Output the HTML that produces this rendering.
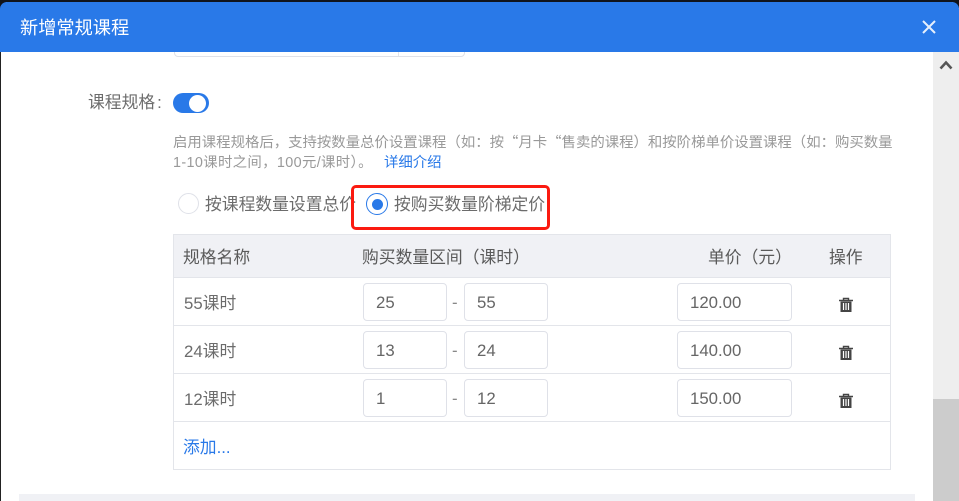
<!DOCTYPE html>
<html lang="zh-CN">
<head>
<meta charset="utf-8">
<style>
html,body{margin:0;padding:0;width:959px;height:501px;overflow:hidden;background:#fff}
body{position:relative;font-family:"Liberation Sans","Noto Sans CJK SC",sans-serif;color:#666}
div,span.a,a{position:absolute;box-sizing:border-box;white-space:nowrap}
.t{font-size:16.8px;line-height:24px;color:#6c6c6c}
.h{font-size:16.8px;line-height:24px;color:#5a5a5a}
.i{background:#fff;border:1px solid #dfe1e8;border-radius:4px;height:38px;font-size:16.8px;line-height:38px;color:#666;padding-left:12px}
.l{left:173px;width:718px;height:1px;background:#e3e5ea}
</style>
</head>
<body>
<div style="left:0;top:0;width:959px;height:2px;background:#10141c"></div>
<div style="left:0;top:0;width:1px;height:501px;background:#222"></div>
<div style="left:0;top:0;width:6px;height:8px;background:#10141c"></div>
<div style="left:953px;top:0;width:6px;height:8px;background:#10141c"></div>

<div style="left:174px;top:40px;width:291px;height:17px;border:1px solid #dfe1e8;border-radius:4px;background:#fff"></div>
<div style="left:398px;top:40px;width:1px;height:16px;background:#e3e5ea"></div>

<div style="left:0;top:2px;width:959px;height:50px;background:#2979e8;border-radius:7px 7px 0 0"></div>
<div style="left:20px;top:15px;font-size:18.2px;line-height:26px;color:#fff">新增常规课程</div>
<svg style="position:absolute;left:921px;top:19px" width="16" height="16" viewBox="0 0 16 16"><path d="M2 2L14 14M14 2L2 14" stroke="#e6effc" stroke-width="2" fill="none"/></svg>

<div style="left:933px;top:52px;width:26px;height:449px;background:#eee"></div>
<div style="left:933px;top:399px;width:26px;height:102px;background:#ccc"></div>
<svg style="position:absolute;left:939px;top:59px" width="14" height="12" viewBox="0 0 14 12"><path d="M1.500 9.500L7 3.500L12.500 9.500" stroke="#555" stroke-width="2.600" fill="none"/></svg>

<div class="t" style="left:88px;top:91px">课程规格<span style="margin-left:2px">:</span></div>
<div style="left:173px;top:93px;width:36px;height:20px;background:#2979e8;border-radius:10px"></div>
<div style="left:189px;top:95px;width:17px;height:17px;background:#fff;border-radius:50%"></div>

<div style="left:173px;top:132px;font-family:'Noto Sans CJK SC',sans-serif;font-size:14.4px;line-height:20px;color:#999">启用课程规格后，支持按数量总价设置课程（如：按“月卡“售卖的课程）和按阶梯单价设置课程（如：购买数量</div>
<div style="left:173px;top:153px;font-size:14.4px;line-height:20px;color:#999;letter-spacing:.35px">1-10课时之间，100元/课时）。</div>
<div style="left:384px;top:153px;font-size:14.4px;line-height:20px;color:#2979e8">详细介绍</div>

<div style="left:178px;top:193px;width:21px;height:21px;border:1px solid #dfe1e8;border-radius:50%;background:#fff"></div>
<div class="t" style="left:205px;top:193px">按课程数量设置总价</div>
<div style="left:351px;top:185px;width:198.500px;height:45px;border:3px solid #fb1a10;border-radius:5px"></div>
<div style="left:366px;top:193px;width:22px;height:22px;border:1.500px solid #2979e8;border-radius:50%;background:#fff"></div>
<div style="left:371.500px;top:198.500px;width:11px;height:11px;border-radius:50%;background:#2979e8"></div>
<div class="t" style="left:394px;top:193px">按购买数量阶梯定价</div>

<div style="left:173px;top:234px;width:718px;height:44px;background:#f0f1f5"></div>
<div class="l" style="top:234px"></div>
<div class="l" style="top:277px"></div>
<div class="l" style="top:325px"></div>
<div class="l" style="top:373px"></div>
<div class="l" style="top:421px"></div>
<div class="l" style="top:469px"></div>
<div style="left:173px;top:234px;width:1px;height:236px;background:#e3e5ea"></div>
<div style="left:890px;top:234px;width:1px;height:236px;background:#e3e5ea"></div>

<div class="h" style="left:183px;top:246px">规格名称</div>
<div class="h" style="left:362px;top:246px">购买数量区间（课时）</div>
<div class="h" style="left:708px;top:246px">单价（元）</div>
<div class="h" style="left:829px;top:246px">操作</div>

<div class="t" style="left:184px;top:292px">55课时</div>
<div class="i" style="left:363px;top:283px;width:84px">25</div>
<div class="t" style="left:452px;top:291px;color:#888">-</div>
<div class="i" style="left:464px;top:283px;width:84px">55</div>
<div class="i" style="left:677px;top:283px;width:115px">120.00</div>
<svg style="position:absolute;left:838px;top:297px" width="16" height="16" viewBox="0 0 16 16"><path d="M1 3.500H15M5.500 3V1.500H10.500V3" stroke="#444" stroke-width="1.400" fill="none"/><path d="M2.500 4.500H13.500V15H2.500Z" fill="#444"/><path d="M5.500 6V13M8 6V13M10.500 6V13" stroke="#fff" stroke-width="1.200"/></svg>

<div class="t" style="left:184px;top:340px">24课时</div>
<div class="i" style="left:363px;top:331px;width:84px">13</div>
<div class="t" style="left:452px;top:339px;color:#888">-</div>
<div class="i" style="left:464px;top:331px;width:84px">24</div>
<div class="i" style="left:677px;top:331px;width:115px">140.00</div>
<svg style="position:absolute;left:838px;top:345px" width="16" height="16" viewBox="0 0 16 16"><path d="M1 3.500H15M5.500 3V1.500H10.500V3" stroke="#444" stroke-width="1.400" fill="none"/><path d="M2.500 4.500H13.500V15H2.500Z" fill="#444"/><path d="M5.500 6V13M8 6V13M10.500 6V13" stroke="#fff" stroke-width="1.200"/></svg>

<div class="t" style="left:184px;top:388px">12课时</div>
<div class="i" style="left:363px;top:379px;width:84px">1</div>
<div class="t" style="left:452px;top:387px;color:#888">-</div>
<div class="i" style="left:464px;top:379px;width:84px">12</div>
<div class="i" style="left:677px;top:379px;width:115px">150.00</div>
<svg style="position:absolute;left:838px;top:393px" width="16" height="16" viewBox="0 0 16 16"><path d="M1 3.500H15M5.500 3V1.500H10.500V3" stroke="#444" stroke-width="1.400" fill="none"/><path d="M2.500 4.500H13.500V15H2.500Z" fill="#444"/><path d="M5.500 6V13M8 6V13M10.500 6V13" stroke="#fff" stroke-width="1.200"/></svg>

<div class="t" style="left:183px;top:436px;color:#2979e8">添加...</div>

<div style="left:19px;top:494px;width:896px;height:7px;background:#f0f1f5"></div>
</body>
</html>
